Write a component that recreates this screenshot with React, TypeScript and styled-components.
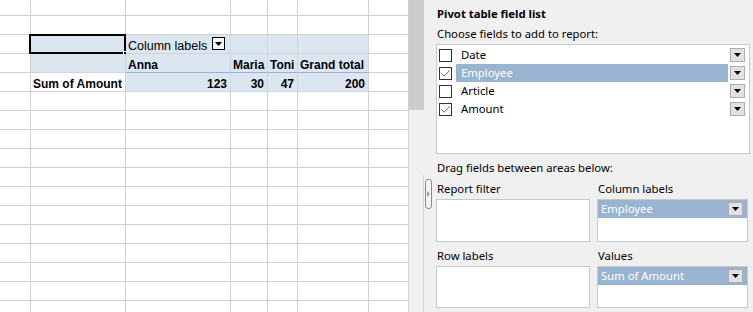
import styled, { createGlobalStyle } from "styled-components";

const GlobalStyle = createGlobalStyle`
    html, body {
        margin: 0;
        padding: 0;
        background: #ffffff;
        overflow: hidden;
    }
    * {
        box-sizing: border-box;
    }
`;

const COLS = [31, 95, 105, 37, 30, 71, 40];
const ROW_COUNT = 17;
const PIVOT_FILL = "#dce6f1";

type CellSpec = {
    text?: string;
    fill?: boolean;
    bold?: boolean;
    right?: boolean;
    dropdown?: boolean;
    selected?: boolean;
    lineBlue?: boolean;
};

// pivot sits in rows 2..4, columns B..F
const pivot: Record<string, CellSpec> = {
    "2-1": { fill: true, selected: true },
    "2-2": { fill: true, text: "Column labels", dropdown: true },
    "2-3": { fill: true },
    "2-4": { fill: true },
    "2-5": { fill: true },
    "3-1": { fill: true },
    "3-2": { fill: true, bold: true, text: "Anna", lineBlue: true },
    "3-3": { fill: true, bold: true, text: "Maria", lineBlue: true },
    "3-4": { fill: true, bold: true, text: "Toni", lineBlue: true },
    "3-5": { fill: true, bold: true, text: "Grand total", lineBlue: true },
    "4-1": { bold: true, text: "Sum of Amount" },
    "4-2": { fill: true, bold: true, right: true, text: "123" },
    "4-3": { fill: true, bold: true, right: true, text: "30" },
    "4-4": { fill: true, bold: true, right: true, text: "47" },
    "4-5": { fill: true, bold: true, right: true, text: "200" },
};

const fields = [
    { name: "Date", checked: false, active: false },
    { name: "Employee", checked: true, active: true },
    { name: "Article", checked: false, active: false },
    { name: "Amount", checked: true, active: false },
];

const CheckIcon = () => (
    <svg width="11" height="11" viewBox="0 0 11 11">
        <path d="M1.5 5.5 L4.2 8.2 L9.5 2.5" fill="none" stroke="#6d6d6d" strokeWidth="1" />
    </svg>
);

const Arrow = () => (
    <svg width="7" height="4" viewBox="0 0 7 4">
        <polygon points="0,0 7,0 3.5,4" fill="#000" />
    </svg>
);

const App = () => {
    return (
        <>
            <GlobalStyle />
            <Page>
                <Sheet>
                    {Array.from({ length: ROW_COUNT }).map((_, r) =>
                        COLS.map((_, c) => {
                            const spec = pivot[`${r}-${c}`] || {};
                            return (
                                <Cell
                                    key={`${r}-${c}`}
                                    $fill={spec.fill}
                                    $bold={spec.bold}
                                    $right={spec.right}
                                    $lineBlue={spec.lineBlue}
                                >
                                    {spec.text && <CellText>{spec.text}</CellText>}
                                    {spec.dropdown && (
                                        <CellDrop>
                                            <Arrow />
                                        </CellDrop>
                                    )}
                                    {spec.selected && (
                                        <Selection>
                                            <FillHandle />
                                        </Selection>
                                    )}
                                </Cell>
                            );
                        })
                    )}
                </Sheet>

                <Panel>
                    <Gutter>
                        <Thumb />
                        <Rail />
                    </Gutter>
                    <Splitter>
                        <SplitterArrow />
                    </Splitter>
                    <Content>
                        <Title>Pivot table field list</Title>
                        <Caption>Choose fields to add to report:</Caption>
                        <FieldBox>
                            {fields.map((f) => (
                                <FieldRow key={f.name}>
                                    <CheckBox>{f.checked && <CheckIcon />}</CheckBox>
                                    <FieldName $active={f.active}>{f.name}</FieldName>
                                    <DropBox>
                                        <Arrow />
                                    </DropBox>
                                </FieldRow>
                            ))}
                        </FieldBox>
                        <Caption $top={4}>Drag fields between areas below:</Caption>
                        <Areas>
                            <AreaLabel>Report filter</AreaLabel>
                            <AreaLabel>Column labels</AreaLabel>
                            <AreaBox />
                            <AreaBox>
                                <Chip>
                                    <ChipText>Employee</ChipText>
                                    <DropBox>
                                        <Arrow />
                                    </DropBox>
                                </Chip>
                            </AreaBox>
                            <AreaLabel $bottom>Row labels</AreaLabel>
                            <AreaLabel $bottom>Values</AreaLabel>
                            <AreaBox />
                            <AreaBox>
                                <Chip>
                                    <ChipText>Sum of Amount</ChipText>
                                    <DropBox>
                                        <Arrow />
                                    </DropBox>
                                </Chip>
                            </AreaBox>
                        </Areas>
                    </Content>
                </Panel>
            </Page>
        </>
    );
};

const Page = styled.div`
    display: flex;
    width: 753px;
    height: 312px;
    overflow: hidden;
`;

const Sheet = styled.div`
    display: grid;
    grid-template-columns: ${COLS.map((w) => `${w}px`).join(" ")};
    grid-auto-rows: 19px;
    width: 409px;
    margin-top: -3px;
    flex-shrink: 0;
    align-content: start;
`;

const Cell = styled.div<{ $fill?: boolean; $bold?: boolean; $right?: boolean; $lineBlue?: boolean }>`
    position: relative;
    display: flex;
    align-items: flex-end;
    justify-content: ${(p) => (p.$right ? "flex-end" : "flex-start")};
    padding: 0 3px 0 2px;
    border-right: 1px solid ${(p) => (p.$fill ? "#ccd5e1" : "#d0d0d0")};
    border-bottom: 1px solid ${(p) => (p.$lineBlue ? "#95b3d7" : p.$fill ? "#ccd5e1" : "#d0d0d0")};
    background: ${(p) => (p.$fill ? PIVOT_FILL : "#ffffff")};
    font-family: "Liberation Sans", Arial, sans-serif;
    font-size: ${(p) => (p.$bold ? "12px" : "12.5px")};
    font-weight: ${(p) => (p.$bold ? 700 : 400)};
    color: #000;
    white-space: nowrap;
`;

const CellText = styled.span`
    line-height: 14px;
`;

const CellDrop = styled.div`
    width: 13px;
    height: 13px;
    margin: 0 0 3px 5px;
    border: 1px solid #000;
    background: #f4f4f4;
    display: flex;
    align-items: center;
    justify-content: center;
    flex-shrink: 0;
`;

const Selection = styled.div`
    position: absolute;
    left: -2px;
    top: -1px;
    right: -1px;
    bottom: -1px;
    border: 2px solid #000;
`;

const FillHandle = styled.div`
    position: absolute;
    right: -4px;
    bottom: -4px;
    width: 5px;
    height: 5px;
    background: #000;
    border: 1px solid #fff;
    border-right: none;
    border-bottom: none;
`;

const Panel = styled.div`
    position: relative;
    flex: 1;
    display: flex;
    background: #f0f0f0;
    font-family: "Noto Sans", "Segoe UI", sans-serif;
    font-size: 11.3px;
    color: #000;
`;

const Gutter = styled.div`
    width: 15px;
    display: flex;
    flex-direction: column;
`;

const Thumb = styled.div`
    height: 110px;
    background: #cdcdcd;
`;

const Rail = styled.div`
    flex: 1;
    margin-top: 65px;
    border-right: 1px solid #d6d6d6;
`;

const Splitter = styled.div`
    position: absolute;
    left: 16px;
    top: 179px;
    width: 7px;
    height: 30px;
    border: 1px solid #8c8c8c;
    border-radius: 3px;
    background: #f4f4f4;
    display: flex;
    align-items: center;
    justify-content: center;
`;

const SplitterArrow = styled.div`
    width: 0;
    height: 0;
    border-top: 3px solid transparent;
    border-bottom: 3px solid transparent;
    border-left: 3px solid #a0a0a0;
`;

const Content = styled.div`
    flex: 1;
    padding: 4px 3px 0 12px;
    display: flex;
    flex-direction: column;
`;

const Title = styled.div`
    font-weight: 700;
    line-height: 20px;
    padding-left: 1px;
`;

const Caption = styled.div<{ $top?: number }>`
    line-height: 20px;
    margin-top: ${(p) => p.$top ?? 0}px;
    padding-left: 1px;
`;

const FieldBox = styled.div`
    height: 110px;
    border: 1px solid #c9c9c9;
    background: #ffffff;
    padding: 1px 0 0 2px;
`;

const FieldRow = styled.div`
    display: flex;
    align-items: center;
    height: 18px;
`;

const CheckBox = styled.div`
    width: 13px;
    height: 13px;
    border: 1px solid #333333;
    background: #ffffff;
    display: flex;
    align-items: center;
    justify-content: center;
    margin-right: 4px;
`;

const FieldName = styled.div<{ $active?: boolean }>`
    width: 272px;
    height: 18px;
    line-height: 18px;
    padding-left: 5px;
    background: ${(p) => (p.$active ? "#99b4d1" : "transparent")};
    color: ${(p) => (p.$active ? "#ffffff" : "#000000")};
    margin-right: 2px;
`;

const DropBox = styled.div`
    width: 15px;
    height: 14px;
    border: 1px solid #adadad;
    background: #e1e1e1;
    display: flex;
    align-items: center;
    justify-content: center;
    flex-shrink: 0;
`;

const Areas = styled.div`
    display: grid;
    grid-template-columns: 154px 151px;
    column-gap: 7px;
    grid-template-rows: 21px 43px 24px 42px;
`;

const AreaLabel = styled.div<{ $bottom?: boolean }>`
    line-height: 20px;
    padding-left: 1px;
    align-self: ${(p) => (p.$bottom ? "end" : "center")};
`;

const AreaBox = styled.div`
    border: 1px solid #c9c9c9;
    background: #ffffff;
`;

const Chip = styled.div`
    display: flex;
    align-items: center;
    justify-content: space-between;
    width: 149px;
    height: 18px;
    padding-right: 4px;
    background: #99b4d1;
`;

const ChipText = styled.div`
    flex: 1;
    padding-left: 3px;
    line-height: 18px;
    color: #ffffff;
`;

export default App;
